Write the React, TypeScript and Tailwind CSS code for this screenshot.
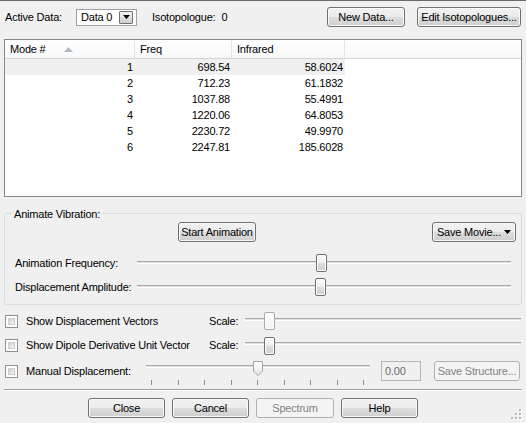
import React from 'react';

type Mode = { mode: number; freq: string; ir: string };

const modes: Mode[] = [
  { mode: 1, freq: '698.54', ir: '58.6024' },
  { mode: 2, freq: '712.23', ir: '61.1832' },
  { mode: 3, freq: '1037.88', ir: '55.4991' },
  { mode: 4, freq: '1220.06', ir: '64.8053' },
  { mode: 5, freq: '2230.72', ir: '49.9970' },
  { mode: 6, freq: '2247.81', ir: '185.6028' },
];

const btnOn =
  'border border-[#707070] rounded-[3px] bg-[linear-gradient(to_bottom,#f2f2f2_0%,#ebebeb_50%,#dddddd_50%,#cfcfcf_100%)] shadow-[inset_0_0_0_1px_#fbfbfb] text-black';
const btnOff = 'border border-[#adb2b5] rounded-[3px] bg-[#f4f4f4] text-[#838383]';

const WinButton: React.FC<{ className?: string; disabled?: boolean; children: React.ReactNode }> = ({
  className = '',
  disabled = false,
  children,
}) => (
  <div className={`h-[20px] flex items-center justify-center shrink-0 ${disabled ? btnOff : btnOn} ${className}`}>
    {children}
  </div>
);

const CheckBox = () => (
  <div className="w-[13px] h-[13px] border border-[#8e8f8f] bg-white p-[2px] shrink-0">
    <div className="w-full h-full bg-gradient-to-br from-[#cbcfd5] to-[#f6f6f6] border border-[#a9abae]/40" />
  </div>
);

const Thumb: React.FC<{ light?: boolean; className?: string }> = ({ light = false, className = '' }) => (
  <div
    className={`absolute w-[11px] h-[18px] rounded-[2px] border ${
      light
        ? 'border-[#a9a9a9] bg-gradient-to-b from-white to-[#f2f2f2]'
        : 'border-[#6e6e6e] bg-[linear-gradient(to_bottom,#fbfbfb_0%,#efefef_45%,#dadada_55%,#d2d2d2_100%)]'
    } shadow-[inset_0_0_0_1px_#ffffff] ${className}`}
  />
);

const Track: React.FC<{ className?: string }> = ({ className = '' }) => (
  <div className={`absolute left-0 right-0 h-[3px] border-t border-[#a9a9a9] border-b border-b-white bg-[#e3e3e3] ${className}`} />
);

export default function App() {
  return (
    <div className="w-[526px] h-[423px] bg-[#f0f0f0] border-t border-[#6a6a6a] flex flex-col relative overflow-hidden font-['Liberation_Sans',Arial,sans-serif] text-[11px] leading-[13px] tracking-[-0.2px] text-black">
      {/* top row */}
      <div className="mt-[6px] h-[20px] flex items-center pl-[5px] pr-[5px]">
        <span className="w-[71px]">Active Data:</span>
        <div className="w-[61px] h-[17px] border border-[#a0a0a0] bg-white flex items-center justify-between pl-[4px] pr-[3px]">
          <span>Data 0</span>
          <div className="w-[14px] h-[13px] border border-[#707070] rounded-[1px] bg-[linear-gradient(to_bottom,#f2f2f2_0%,#ebebeb_50%,#dddddd_50%,#cfcfcf_100%)] flex items-center justify-center">
            <svg width="7" height="4" viewBox="0 0 7 4">
              <polygon points="0,0 7,0 3.5,4" fill="#000" />
            </svg>
          </div>
        </div>
        <span className="ml-[15px]">Isotopologue:</span>
        <span className="ml-[6px]">0</span>
        <div className="flex-1" />
        <WinButton className="w-[78px]">New Data...</WinButton>
        <WinButton className="w-[104px] ml-[12px]">Edit Isotopologues...</WinButton>
      </div>

      {/* modes table */}
      <div className="mt-[12px] mx-[4px] h-[158px] border border-[#828790] bg-white flex flex-col">
        <div className="h-[19px] flex border-b border-[#d5d5d5] bg-gradient-to-b from-white to-[#f7f8f9]">
          <div className="w-[130px] flex items-center pl-[5px] border-r border-[#e3e4e6]">
            <span>Mode #</span>
            <svg className="ml-[18px]" width="9" height="5" viewBox="0 0 9 5">
              <polygon points="0,5 9,5 4.5,0" fill="#b3b8bf" />
            </svg>
          </div>
          <div className="w-[97px] flex items-center pl-[5px] border-r border-[#e3e4e6]">Freq</div>
          <div className="w-[113px] flex items-center pl-[5px] border-r border-[#e3e4e6]">Infrared</div>
          <div className="flex-1" />
        </div>
        {modes.map((m) => (
          <div key={m.mode} className={`h-[16px] flex items-center w-[340px] ${m.mode === 1 ? 'bg-[#f0f0f0]' : ''}`}>
            <div className="w-[130px] text-right pr-[2px]">{m.mode}</div>
            <div className="w-[97px] text-right pr-[2px]">{m.freq}</div>
            <div className="w-[113px] text-right pr-[2px]">{m.ir}</div>
          </div>
        ))}
      </div>

      {/* animate vibration group */}
      <fieldset className="mt-[10px] mx-[4px] border border-[#d5dfe5] rounded-[3px] pt-[2px] pb-[8px] pl-[10px] pr-[5px]">
        <legend className="ml-[-3px] px-[2px] leading-[13px] translate-y-[1px]">Animate Vibration:</legend>
        <div className="h-[20px] flex items-center">
          <WinButton className="w-[78px] ml-[163px]">Start Animation</WinButton>
          <div className="flex-1" />
          <WinButton className="w-[84px] gap-[3px]">
            <span>Save Movie...</span>
            <svg width="7" height="4" viewBox="0 0 7 4">
              <polygon points="0,0 7,0 3.5,4" fill="#000" />
            </svg>
          </WinButton>
        </div>
        <div className="mt-[12px] h-[18px] flex items-center">
          <span className="w-[122px]">Animation Frequency:</span>
          <div className="relative w-[374px] h-[18px]">
            <Track className="top-[7px]" />
            <Thumb className="top-0 left-[179px]" />
          </div>
        </div>
        <div className="mt-[6px] h-[18px] flex items-center">
          <span className="w-[122px]">Displacement Amplitude:</span>
          <div className="relative w-[374px] h-[18px]">
            <Track className="top-[7px]" />
            <Thumb className="top-0 left-[178px]" />
          </div>
        </div>
      </fieldset>

      {/* vector options */}
      <div className="mt-[7px] h-[18px] flex items-center pl-[5px]">
        <CheckBox />
        <span className="ml-[8px] w-[183px]">Show Displacement Vectors</span>
        <span className="w-[36px]">Scale:</span>
        <div className="relative w-[276px] h-[18px]">
          <Track className="top-[6px]" />
          <Thumb light className="top-0 left-[19px]" />
        </div>
      </div>
      <div className="mt-[6px] h-[18px] flex items-center pl-[5px]">
        <CheckBox />
        <span className="ml-[8px] w-[183px]">Show Dipole Derivative Unit Vector</span>
        <span className="w-[36px]">Scale:</span>
        <div className="relative w-[276px] h-[18px]">
          <Track className="top-[6px]" />
          <Thumb className="top-[1px] left-[19px]" />
        </div>
      </div>
      <div className="mt-[7px] h-[20px] flex items-center pl-[5px]">
        <CheckBox />
        <span className="ml-[8px] w-[120px]">Manual Displacement:</span>
        <div className="relative w-[224px] h-[20px] self-start">
          <Track className="top-[4px]" />
          <svg className="absolute top-0 left-[107px]" width="10" height="15" viewBox="0 0 10 15">
            <defs>
              <linearGradient id="mthumb" x1="0" y1="0" x2="0" y2="1">
                <stop offset="0" stopColor="#ffffff" />
                <stop offset="1" stopColor="#e6e6e6" />
              </linearGradient>
            </defs>
            <path d="M0.5,0.5 H9.5 V10 L5,14.5 L0.5,10 Z" fill="url(#mthumb)" stroke="#a3a3a3" />
          </svg>
          <div className="absolute top-[19px] left-[5px] w-[213px] flex justify-between">
            {Array.from({ length: 9 }).map((_, i) => (
              <div key={i} className="w-px h-[5px] bg-[#8a8a8a]" />
            ))}
          </div>
        </div>
        <div className="ml-[11px] w-[40px] h-[20px] border border-[#b4b4b4] bg-[#f0f0f0] text-[#6d6d6d] flex items-center pl-[3px]">
          0.00
        </div>
        <WinButton disabled className="w-[86px] ml-[13px]">
          Save Structure...
        </WinButton>
      </div>

      {/* separator */}
      <div className="mt-[8px] mx-[4px] h-[2px] border-t border-[#a0a0a0] border-b border-b-white" />

      {/* dialog buttons */}
      <div className="mt-[7px] h-[20px] flex items-center ml-[88px] gap-[7px]">
        <WinButton className="w-[77px]">Close</WinButton>
        <WinButton className="w-[77px]">Cancel</WinButton>
        <WinButton disabled className="w-[78px]">
          Spectrum
        </WinButton>
        <WinButton className="w-[77px]">Help</WinButton>
      </div>

      {/* size grip */}
      <svg className="absolute right-[4px] bottom-[3px]" width="11" height="11" viewBox="0 0 11 11">
        {[
          [8, 0],
          [8, 4],
          [4, 4],
          [8, 8],
          [4, 8],
          [0, 8],
        ].map(([x, y], i) => (
          <g key={i}>
            <rect x={x + 1} y={y + 1} width="2" height="2" fill="#ffffff" />
            <rect x={x} y={y} width="2" height="2" fill="#b8b8b8" />
          </g>
        ))}
      </svg>
    </div>
  );
}
